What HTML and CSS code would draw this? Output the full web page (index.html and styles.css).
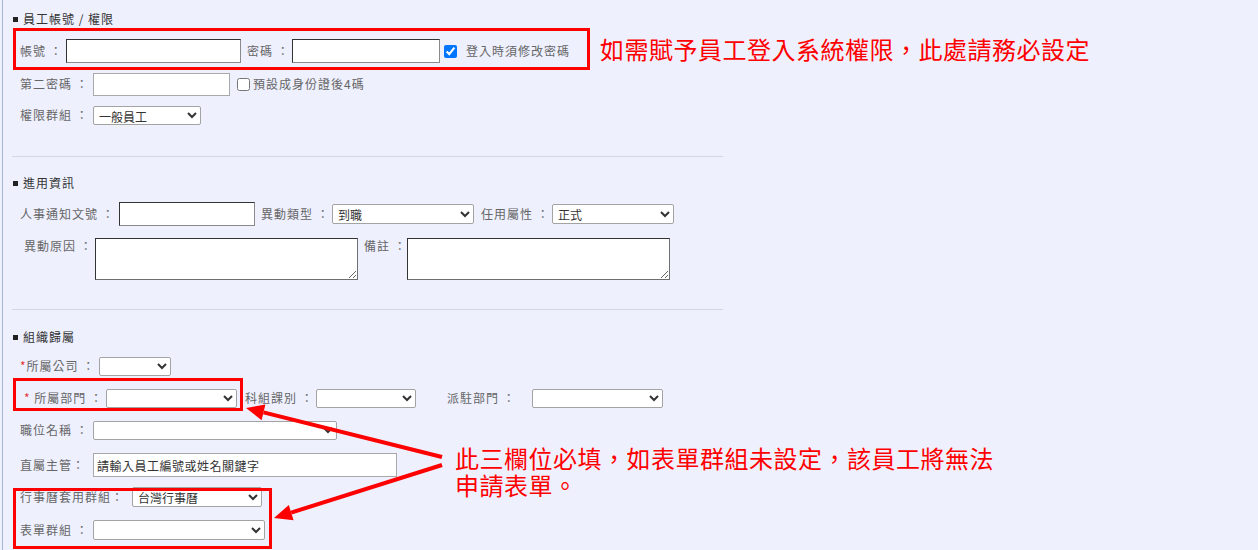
FILE: index.html
```html
<!DOCTYPE html>
<html lang="zh-Hant">
<head>
<meta charset="utf-8">
<title>員工資料</title>
<link rel="stylesheet" href="styles.css">
</head>
<body>
<div class="page">
  <div class="sec-title t1"><span class="sq"></span>員工帳號 / 權限</div>
  <div class="row r1">
    <span class="lbl w46">帳號 ：</span>
    <input class="inp dark w175" type="text">
    <span class="lbl w45 ml6">密碼 ：</span>
    <input class="inp dark w148" type="password">
    <input class="chk ml4" type="checkbox" checked>
    <span class="lbl ml9">登入時須修改密碼</span>
  </div>
  <div class="row r2">
    <span class="lbl w73">第二密碼 ：</span>
    <input class="inp light w137 h23" type="password">
    <input class="chk ml7" type="checkbox">
    <span class="lbl ml3">預設成身份證後4碼</span>
  </div>
  <div class="row r3">
    <span class="lbl w73">權限群組 ：</span>
    <select class="sel w108 h19"><option>一般員工</option></select>
  </div>
  <div class="divider d1"></div>

  <div class="sec-title t2"><span class="sq"></span>進用資訊</div>
  <div class="row rA">
    <span class="lbl w99">人事通知文號 ：</span>
    <input class="inp dark w136" type="text">
    <span class="lbl w71 ml6">異動類型 ：</span>
    <select class="sel w142 h20"><option>到職</option></select>
    <span class="lbl w71 ml7">任用屬性 ：</span>
    <select class="sel w122 h20"><option>正式</option></select>
  </div>
  <div class="row rB">
    <span class="lbl w71">異動原因 ：</span>
    <textarea class="ta"></textarea>
    <span class="lbl w43 ml6">備註 ：</span>
    <textarea class="ta"></textarea>
  </div>
  <div class="divider d2"></div>

  <div class="sec-title t3"><span class="sq"></span>組織歸屬</div>
  <div class="row rC">
    <span class="lbl w79"><span class="req">*</span>所屬公司 ：</span>
    <select class="sel w72 h19"><option></option></select>
  </div>
  <div class="row rD">
    <span class="lbl w82"><span class="req">*</span> 所屬部門 ：</span>
    <select class="sel w131 h19"><option></option></select>
    <span class="lbl w71 ml8">科組課別 ：</span>
    <select class="sel w100 h19"><option></option></select>
    <span class="lbl w85 ml31">派駐部門 ：</span>
    <select class="sel w131 h19"><option></option></select>
  </div>
  <div class="row rE">
    <span class="lbl w73">職位名稱 ：</span>
    <select class="sel w244 h19"><option></option></select>
  </div>
  <div class="row rF">
    <span class="lbl w73">直屬主管：</span>
    <input class="inp light w304 txt" type="text" value="請輸入員工編號或姓名關鍵字">
  </div>
  <div class="row rG">
    <span class="lbl w112">行事曆套用群組：</span>
    <select class="sel w130 h20"><option>台灣行事曆</option></select>
  </div>
  <div class="row rH">
    <span class="lbl w73">表單群組 ：</span>
    <select class="sel w172 h20"><option></option></select>
  </div>
</div>

<div class="mark m1"></div>
<div class="mark m2"></div>
<div class="mark m3"></div>
<div class="note n1">如需賦予員工登入系統權限，此處請務必設定</div>
<div class="note n2">此三欄位必填，如表單群組未設定，該員工將無法<br>申請表單。</div>
<svg class="arrows" width="1258" height="550" viewBox="0 0 1258 550">
  <line x1="442" y1="457" x2="263.5" y2="412.4" stroke="#ff0000" stroke-width="4"/>
  <polygon points="246,408 265.4,404.6 261.6,420.2" fill="#ff0000"/>
  <line x1="442" y1="465" x2="291.2" y2="512.6" stroke="#ff0000" stroke-width="4"/>
  <polygon points="274,518 288.8,505 293.6,520.2" fill="#ff0000"/>
</svg>
</body>
</html>
```

FILE: styles.css
```css
html, body {
  margin: 0;
  padding: 0;
}
body {
  position: relative;
  width: 1258px;
  height: 550px;
  overflow: hidden;
  background: #eef0fe;
  font-family: "Noto Sans CJK TC", "Noto Sans", sans-serif;
}
.page {
  margin-left: 2px;
  height: 550px;
  box-sizing: border-box;
  border-left: 1px solid #a9b7d2;
  padding-left: 9px;
  padding-top: 1px;
}
.sec-title {
  display: flex;
  align-items: center;
  font-size: 12px;
  line-height: 16px;
  height: 16px;
  color: #333;
  letter-spacing: 1px;
}
.sq {
  display: inline-block;
  width: 5px;
  height: 5px;
  background: #222;
  margin: 1px 5px 0 1px;
  flex: none;
}
.t1 { margin-top: 10px; }
.t2 { margin-top: 18px; }
.t3 { margin-top: 19px; }

.row {
  display: flex;
  align-items: center;
  height: 26px;
  padding-left: 8px;
}
.r1 { margin-top: 11px; }
.r2 { margin-top: 7px; }
.r3 { margin-top: 5px; }
.rA { margin-top: 10px; }
.rB { margin-top: 11px; height: 42px; align-items: flex-start; padding-left: 12px; }
.rB .lbl { margin-top: 0; line-height: 16px; }
.rC { margin-top: 8px; }
.rD { margin-top: 6px; padding-left: 12px; }
.rE { margin-top: 6px; }
.rF { margin-top: 9px; }
.rG { margin-top: 6px; }
.rH { margin-top: 7px; }

.divider {
  height: 1px;
  width: 711px;
  background: #d5d6e4;
}
.d1 { margin-top: 28px; }
.d2 { margin-top: 29px; }

.lbl {
  font-size: 12px;
  line-height: 16px;
  color: #666;
  letter-spacing: 1px;
  white-space: nowrap;
  flex: none;
}
.req { color: #e53333; }

.inp {
  box-sizing: border-box;
  height: 24px;
  margin: 0;
  padding: 0 3px;
  background: #fff;
  border-radius: 0;
  font-family: inherit;
  font-size: 12px;
  color: #333;
  flex: none;
}
.inp.dark {
  border: 1px solid #8a8a8a;
  border-top-color: #333;
  border-left-color: #333;
}
.inp.light {
  border: 1px solid #a9a9a9;
}
.h23 { height: 23px; }
.txt { letter-spacing: 0.5px; }

.sel {
  box-sizing: border-box;
  margin: 0;
  padding: 0 1px;
  background: #fff;
  border: 1px solid #a3a3a3;
  border-radius: 2px;
  font-family: inherit;
  font-size: 12px;
  color: #333;
  flex: none;
}
.h19 { height: 19px; }
.h20 { height: 20px; }

.ta {
  box-sizing: border-box;
  width: 263px;
  height: 42px;
  margin: 0;
  background: #fff;
  border: 1px solid #6f6f6f;
  border-top-color: #333;
  border-left-color: #333;
  border-radius: 0;
  flex: none;
}

.chk {
  width: 13px;
  height: 13px;
  margin: 0;
  flex: none;
}

.w43 { width: 43px; }
.w45 { width: 45px; }
.w46 { width: 46px; }
.w71 { width: 71px; }
.w72 { width: 72px; }
.w73 { width: 73px; }
.w79 { width: 79px; }
.w82 { width: 82px; }
.w85 { width: 85px; }
.w99 { width: 99px; }
.w100 { width: 100px; }
.w108 { width: 108px; }
.w112 { width: 112px; }
.w122 { width: 122px; }
.w130 { width: 130px; }
.w131 { width: 131px; }
.w136 { width: 136px; }
.w137 { width: 137px; }
.w142 { width: 142px; }
.w148 { width: 148px; }
.w172 { width: 172px; }
.w175 { width: 175px; }
.w244 { width: 244px; }
.w304 { width: 304px; }

.ml3 { margin-left: 3px; }
.ml4 { margin-left: 4px; }
.ml6 { margin-left: 6px; }
.ml7 { margin-left: 7px; }
.ml8 { margin-left: 8px; }
.ml9 { margin-left: 9px; }
.ml31 { margin-left: 31px; }

.mark {
  position: absolute;
  box-sizing: border-box;
  border: 3px solid #ff0000;
}
.m1 { left: 13px; top: 28px; width: 577px; height: 42px; }
.m2 { left: 13px; top: 378px; width: 230px; height: 33px; }
.m3 { left: 13px; top: 488px; width: 259px; height: 61px; }

.note {
  position: absolute;
  color: #ff0000;
  font-size: 24px;
  letter-spacing: 0.5px;
  white-space: nowrap;
}
.n1 { left: 600px; top: 33px; line-height: 32px; }
.n2 { left: 455px; top: 444px; line-height: 27px; }

.arrows {
  position: absolute;
  left: 0;
  top: 0;
  pointer-events: none;
}
```
